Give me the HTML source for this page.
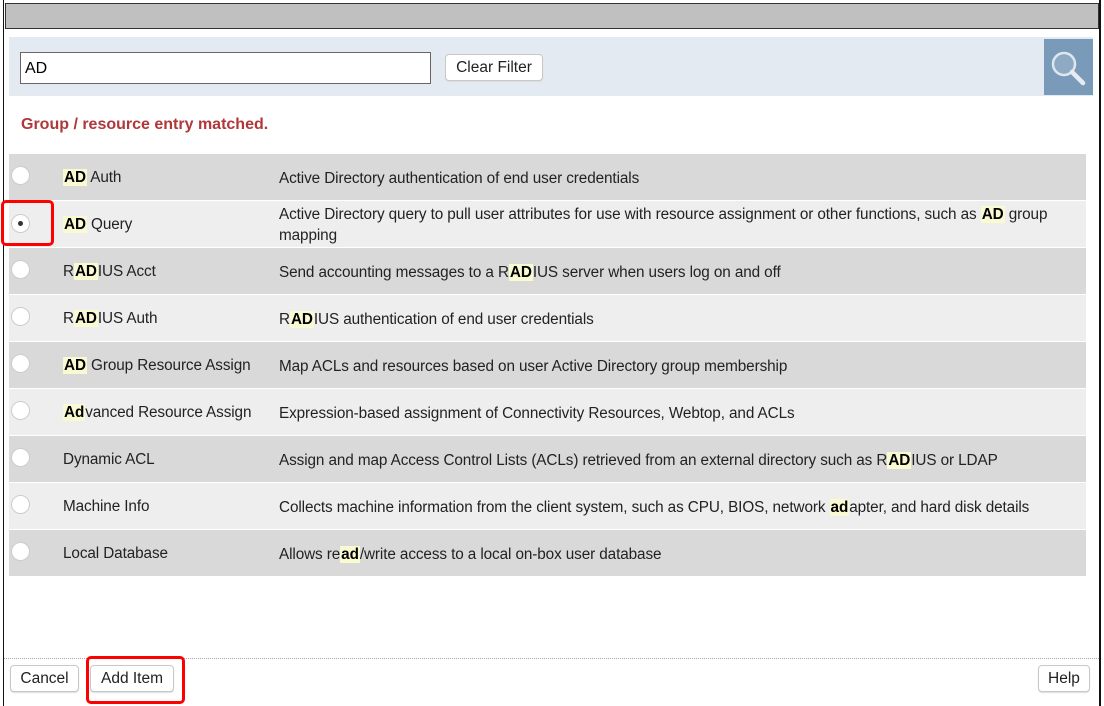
<!DOCTYPE html>
<html><head><style>
body{margin:0;width:1104px;height:706px;background:#fff;font-family:"Liberation Sans",Arial,sans-serif;position:relative;overflow:hidden}
.a{position:absolute}
.hl{background:#fafad2;font-weight:bold;color:#000;padding:0 1px}
.row{position:absolute;left:9px;width:1077px;height:46px;font-size:15.3px;color:#222;letter-spacing:-0.1px}
.row .r{position:absolute;left:2px;top:12px;width:19px;height:19px;border-radius:50%;background:#fff;border:1px solid #ccc;box-sizing:border-box}
.row .n{position:absolute;left:54px;top:1px;height:46px;line-height:46px}
.row .d{position:absolute;left:270px;top:1px;height:46px;display:flex;align-items:center;width:790px}
.row .d div{line-height:21px}
.btn{position:absolute;border:1px solid #c8c8c8;border-radius:4px;background:#fff;font-size:15.5px;color:#222;text-align:center;box-sizing:border-box;box-shadow:0 1px 1px #ddd}
</style></head><body>
<div class="a" style="left:3px;top:0;width:1px;height:706px;background:#111"></div>
<div class="a" style="left:1099px;top:0;width:2px;height:706px;background:#111"></div>
<div class="a" style="left:5px;top:3px;width:1092px;height:24px;background:#c0c0c0;border:1px solid #333"></div>
<div class="a" style="left:9px;top:37px;width:1084px;height:59px;background:#e3eaf1"></div>
<div class="a" style="left:1044px;top:39px;width:49px;height:56px;background:#7a9aba">
<svg width="49" height="56" viewBox="0 0 49 56"><circle cx="20" cy="25" r="11" fill="rgba(255,255,255,0.15)" stroke="#dfe6ee" stroke-width="2.5"/><line x1="28" y1="33" x2="39" y2="44" stroke="#e8ecf0" stroke-width="4.5" stroke-linecap="round"/></svg></div>
<div class="a" style="left:20px;top:52px;height:30px;background:#fff;border:1px solid #666;font-size:16px;line-height:32px;padding-left:4px;width:405px">AD</div>
<div class="btn" style="left:445px;top:54px;width:98px;height:27px;line-height:25px">Clear Filter</div>
<div class="a" style="left:21px;top:116px;font-size:16px;font-weight:bold;color:#b0373a">Group / resource entry matched.</div>

<div class="row" style="top:154px;background:#d9d9d9"><div class="r"></div><div class="n"><span class="hl">AD</span> Auth</div><div class="d"><div>Active Directory authentication of end user credentials</div></div></div>
<div class="row" style="top:201px;background:#eeeeee"><div class="r" style="top:13px"><div style="position:absolute;left:6px;top:6px;width:5px;height:5px;border-radius:50%;background:#333"></div></div><div class="n"><span class="hl">AD</span> Query</div><div class="d"><div>Active Directory query to pull user attributes for use with resource assignment or other functions, such as <span class="hl">AD</span> group mapping</div></div></div>
<div class="row" style="top:248px;background:#d9d9d9"><div class="r"></div><div class="n">R<span class="hl">AD</span>IUS Acct</div><div class="d"><div>Send accounting messages to a R<span class="hl">AD</span>IUS server when users log on and off</div></div></div>
<div class="row" style="top:295px;background:#eeeeee"><div class="r"></div><div class="n">R<span class="hl">AD</span>IUS Auth</div><div class="d"><div>R<span class="hl">AD</span>IUS authentication of end user credentials</div></div></div>
<div class="row" style="top:342px;background:#d9d9d9"><div class="r"></div><div class="n"><span class="hl">AD</span> Group Resource Assign</div><div class="d"><div>Map ACLs and resources based on user Active Directory group membership</div></div></div>
<div class="row" style="top:389px;background:#eeeeee"><div class="r"></div><div class="n"><span class="hl">Ad</span>vanced Resource Assign</div><div class="d"><div>Expression-based assignment of Connectivity Resources, Webtop, and ACLs</div></div></div>
<div class="row" style="top:436px;background:#d9d9d9"><div class="r"></div><div class="n">Dynamic ACL</div><div class="d"><div>Assign and map Access Control Lists (ACLs) retrieved from an external directory such as R<span class="hl">AD</span>IUS or LDAP</div></div></div>
<div class="row" style="top:483px;background:#eeeeee"><div class="r"></div><div class="n">Machine Info</div><div class="d"><div>Collects machine information from the client system, such as CPU, BIOS, network <span class="hl">ad</span>apter, and hard disk details</div></div></div>
<div class="row" style="top:530px;background:#d9d9d9"><div class="r"></div><div class="n">Local Database</div><div class="d"><div>Allows re<span class="hl">ad</span>/write access to a local on-box user database</div></div></div>

<div class="a" style="left:1px;top:200px;width:53px;height:46px;border:3px solid #f00;border-radius:5px;box-sizing:border-box"></div>
<div class="a" style="left:4px;top:658px;width:1095px;border-top:1px dotted #aaa"></div>
<div class="btn" style="left:10px;top:665px;width:69px;height:27px;line-height:25px">Cancel</div>
<div class="btn" style="left:90px;top:665px;width:84px;height:27px;line-height:25px">Add Item</div>
<div class="a" style="left:86px;top:656px;width:99px;height:48px;border:3px solid #f00;border-radius:5px;box-sizing:border-box"></div>
<div class="btn" style="left:1038px;top:665px;width:52px;height:27px;line-height:25px">Help</div>
</body></html>
